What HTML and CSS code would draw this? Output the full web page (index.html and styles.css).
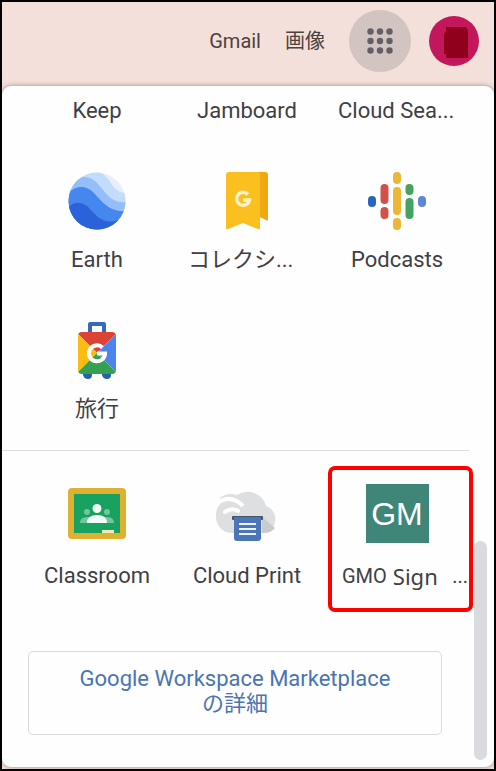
FILE: index.html
```html
<!DOCTYPE html>
<html lang="ja">
<head>
    <meta charset="UTF-8">
    <meta name="viewport" content="width=device-width, initial-scale=1.0">
    <title>Google アプリ</title>
    <link rel="stylesheet" href="styles.css">
</head>
<body>
    <header class="header">
        <a class="header-link" href="#">Gmail</a>
        <a class="header-link" href="#">画像</a>
        <button class="apps-button" type="button" aria-label="Google アプリ">
            <svg width="26" height="26" viewBox="0 0 26 26" fill="#626064">
                <circle cx="3.5" cy="3.5" r="3.2"/><circle cx="13" cy="3.5" r="3.2"/><circle cx="22.5" cy="3.5" r="3.2"/>
                <circle cx="3.5" cy="13" r="3.2"/><circle cx="13" cy="13" r="3.2"/><circle cx="22.5" cy="13" r="3.2"/>
                <circle cx="3.5" cy="22.5" r="3.2"/><circle cx="13" cy="22.5" r="3.2"/><circle cx="22.5" cy="22.5" r="3.2"/>
            </svg>
        </button>
        <button class="avatar" type="button" aria-label="アカウント">
            <svg width="50" height="50" viewBox="0 0 50 50">
                <circle cx="25" cy="25" r="25" fill="#c2185b"/>
                <path d="M17 11h20l2 3v28H17v-4h-2V18l2-3z" fill="#90001c"/>
            </svg>
        </button>
    </header>

    <main class="panel">
        <div class="content">
            <nav class="apps apps-main">
                <a class="app app-cut" href="#"><span class="app-name">Keep</span></a>
                <a class="app app-cut" href="#"><span class="app-name">Jamboard</span></a>
                <a class="app app-cut" href="#"><span class="app-name app-name-clipped">Cloud Sea...</span></a>

                <a class="app" href="#">
                    <svg class="app-icon" viewBox="0 0 58 58">
                        <clipPath id="globe"><circle cx="29" cy="29" r="28.5"/></clipPath>
                        <g clip-path="url(#globe)">
                            <rect width="58" height="58" fill="#e8eff8"/>
                            <path d="M0 0h31C40 3 42 12 48 17c4 3 7 4 10 4v37H0z" fill="#c3dcfb"/>
                            <path d="M0 14C8 2 22 3 30 12c8 9 14 20 28 18v28H0z" fill="#94bdfa"/>
                            <path d="M0 22c7-9 18-9 26-1 8 9 17 20 32 18v19H0z" fill="#4586ef"/>
                            <path d="M0 36c7-8 16-6 22 1 7 8 15 16 28 11v10H0z" fill="#2a62d9"/>
                        </g>
                    </svg>
                    <span class="app-name">Earth</span>
                </a>
                <a class="app" href="#">
                    <svg class="app-icon" viewBox="0 0 58 58">
                        <path d="M39 0h8q3 0 3 3v46l-8-4h-3z" fill="#eda812"/>
                        <path d="M11 0h29q2 0 2 2v54q0 2-2 1L25 51 10 57q-2 1-2-1V3q0-3 3-3z" fill="#fbbf1f"/>
                        <path d="M30 22.500A6.500 6.500 0 1 0 31.500 28H25" fill="none" stroke="#fff3c9" stroke-width="3.500"/>
                    </svg>
                    <span class="app-name app-name-clipped">コレクシ...</span>
                </a>
                <a class="app" href="#">
                    <svg class="app-icon" viewBox="0 0 58 58" fill="none" stroke-width="8" stroke-linecap="round">
                        <path d="M4 28v3" stroke="#2567bd"/>
                        <path d="M16.500 16v12M16.500 39v4" stroke="#d1524b"/>
                        <path d="M29 4v4M29 19v20M29 50v4" stroke="#edb736"/>
                        <path d="M41.500 16v3M41.500 30v13" stroke="#45a25f"/>
                        <path d="M54 28v3" stroke="#5b86da"/>
                    </svg>
                    <span class="app-name">Podcasts</span>
                </a>

                <a class="app" href="#">
                    <svg class="app-icon" viewBox="0 0 58 58">
                        <path d="M22 13V3h14v10" fill="none" stroke="#356abb" stroke-width="4" stroke-linejoin="round"/>
                        <path d="M15 51h9v3q0 4-4 4t-5-4zM34 51h9v3q0 4-4 4t-5-4z" fill="#2860a7"/>
                        <clipPath id="suitcase"><rect x="10" y="11" width="38" height="42" rx="4"/></clipPath>
                        <g clip-path="url(#suitcase)">
                            <path d="M8 11h42L29 32z" fill="#dd4335"/>
                            <path d="M10 13v38l19-19z" fill="#fabd15"/>
                            <path d="M48 13v38L29 32z" fill="#4c83ed"/>
                            <path d="M8 53h42L29 32z" fill="#35a052"/>
                        </g>
                        <path d="M34.500 26.500a8 8 0 1 0 2.500 6H29" fill="none" stroke="#fff" stroke-width="4"/>
                    </svg>
                    <span class="app-name">旅行</span>
                </a>
            </nav>

            <nav class="apps apps-more">
                <a class="app" href="#">
                    <svg class="app-icon" viewBox="0 0 58 58">
                        <rect y="4" width="58" height="51" rx="4" fill="#dfb130"/>
                        <rect x="6" y="10" width="46" height="39" fill="#19a160"/>
                        <circle cx="19" cy="28" r="3" fill="#73c69c"/>
                        <circle cx="39" cy="28" r="3" fill="#73c69c"/>
                        <path d="M12 39q0-6 7-6h20q7 0 7 6z" fill="#73c69c"/>
                        <circle cx="29" cy="24.500" r="4.500" fill="#f2fcf6"/>
                        <path d="M19 39q0-8 10-8t10 8z" fill="#f2fcf6"/>
                        <rect x="34" y="46" width="12" height="3" fill="#eee8bd"/>
                    </svg>
                    <span class="app-name">Classroom</span>
                </a>
                <a class="app" href="#">
                    <svg class="app-icon app-icon-wide" viewBox="0 0 62 58">
                        <path d="M15 49Q3 48 0 35Q-1 26 4 20L3 15Q10 8 21 11A19 19 0 0 1 50 22A14 14 0 0 1 48 49z" fill="#dedfe0"/>
                        <path d="M46 33l13 11q-4 5-11 5h-2z" fill="#c9cacc"/>
                        <path d="M0 20q14-11 27 2" fill="none" stroke="#fff" stroke-width="4"/>
                        <path d="M9 28q7-5 13-1" fill="none" stroke="#fff" stroke-width="4" stroke-linecap="round"/>
                        <rect x="16" y="32" width="31" height="4" rx="1" fill="#475366"/>
                        <path d="M18 33h27v21q0 3-3 3H21q-3 0-3-3z" fill="#4b75b9"/>
                        <path d="M23 40h17M23 45h17M23 50h17" stroke="#eef3fb" stroke-width="2"/>
                    </svg>
                    <span class="app-name">Cloud Print</span>
                </a>
                <a class="app app-marked" href="#">
                    <span class="app-icon app-letters">GM</span>
                    <span class="app-name app-name-long"><span>GMO</span><span class="app-name-sub">Sign</span><span class="app-name-rest">...</span></span>
                </a>
            </nav>

            <a class="marketplace" href="#">Google Workspace Marketplace<br>の詳細</a>
        </div>
        <div class="scrollbar"><div class="thumb"></div></div>
    </main>
</body>
</html>
```
FILE: styles.css
```css
* {
    margin: 0;
    padding: 0;
    box-sizing: border-box;
}

body {
    min-height: 100vh;
    display: flex;
    flex-direction: column;
    padding-bottom: 2px;
    border: 2px solid #000;
    background: #f4e0da;
    font-family: Roboto, "Noto Sans CJK JP", sans-serif;
    font-size: 22px;
    line-height: 24px;
    color: #3e4045;
}

a {
    color: inherit;
    text-decoration: none;
}

button {
    border: none;
    cursor: pointer;
}

.header {
    height: 84px;
    display: flex;
    align-items: center;
    justify-content: flex-end;
    padding: 0 15px 6px 15px;
}

.header-link {
    margin-right: 24px;
    font-size: 20px;
    color: #4c4240;
}

.apps-button {
    width: 62px;
    height: 62px;
    display: flex;
    align-items: center;
    justify-content: center;
    margin-right: 18px;
    border-radius: 50%;
    background: #d2c4c1;
}

.avatar {
    width: 50px;
    height: 50px;
    border-radius: 50%;
    background: none;
}

.avatar svg {
    display: block;
}

.panel {
    flex: 1;
    display: flex;
    border-radius: 9px;
    background: #fefefe;
    box-shadow: 0 0 5px rgba(80, 50, 40, 0.5);
}

.content {
    flex: 1;
    min-width: 0;
}

.apps {
    display: grid;
    grid-template-columns: repeat(3, 1fr);
    padding: 0 2px 0 20px;
}

.apps-main {
    padding-top: 13px;
    padding-bottom: 29px;
}

.apps-more {
    position: relative;
    padding-top: 34px;
}

/* the divider stops just before the scrollbar */
.apps-more::before {
    content: '';
    position: absolute;
    top: 0;
    left: 0;
    right: 5px;
    height: 1px;
    background: #dcdcde;
}

.app {
    display: flex;
    flex-direction: column;
    align-items: center;
    padding-top: 49px;
}

.app-cut,
.apps-more .app {
    padding-top: 0;
}

.app-icon {
    width: 58px;
    height: 58px;
    margin-bottom: 18px;
}

.apps-more .app-icon {
    margin-bottom: 22px;
}

.app-icon-wide {
    width: 62px;
}

.app-name {
    height: 24px;
    white-space: nowrap;
}

/* shortened names start at the left of the label box */
.app-name-clipped {
    width: 118px;
}

.apps-more .app-letters {
    width: 63px;
    height: 59px;
    margin-bottom: 21px;
    background: #3f8679;
    color: #fff;
    font-family: "Liberation Sans", Arial, sans-serif;
    font-size: 32px;
    line-height: 60px;
    text-align: center;
}

.app-marked {
    position: relative;
}

.app-marked::after {
    content: '';
    position: absolute;
    top: -18px;
    left: 6px;
    right: -1px;
    bottom: -24px;
    border: 4px solid #fd0000;
    border-radius: 7px;
}

.app-name-long {
    display: flex;
    align-self: stretch;
    padding: 0 4px 0 20px;
    font-size: 20px;
}

.app-name-sub {
    margin-left: 6px;
    font-family: "Noto Sans", sans-serif;
    font-size: 22px;
}

.app-name-rest {
    margin-left: auto;
}

.marketplace {
    display: block;
    margin: 63px 32px 0 26px;
    padding: 14px 16px 18px;
    border: 1px solid #dadbdd;
    border-radius: 5px;
    color: #4a74b2;
    line-height: 25px;
    text-align: center;
}

.scrollbar {
    width: 20px;
    display: flex;
    flex-direction: column;
    justify-content: flex-end;
    padding: 0 7px 7px 0;
}

.thumb {
    height: 219px;
    border-radius: 7px;
    background: #dadbdf;
}
```
